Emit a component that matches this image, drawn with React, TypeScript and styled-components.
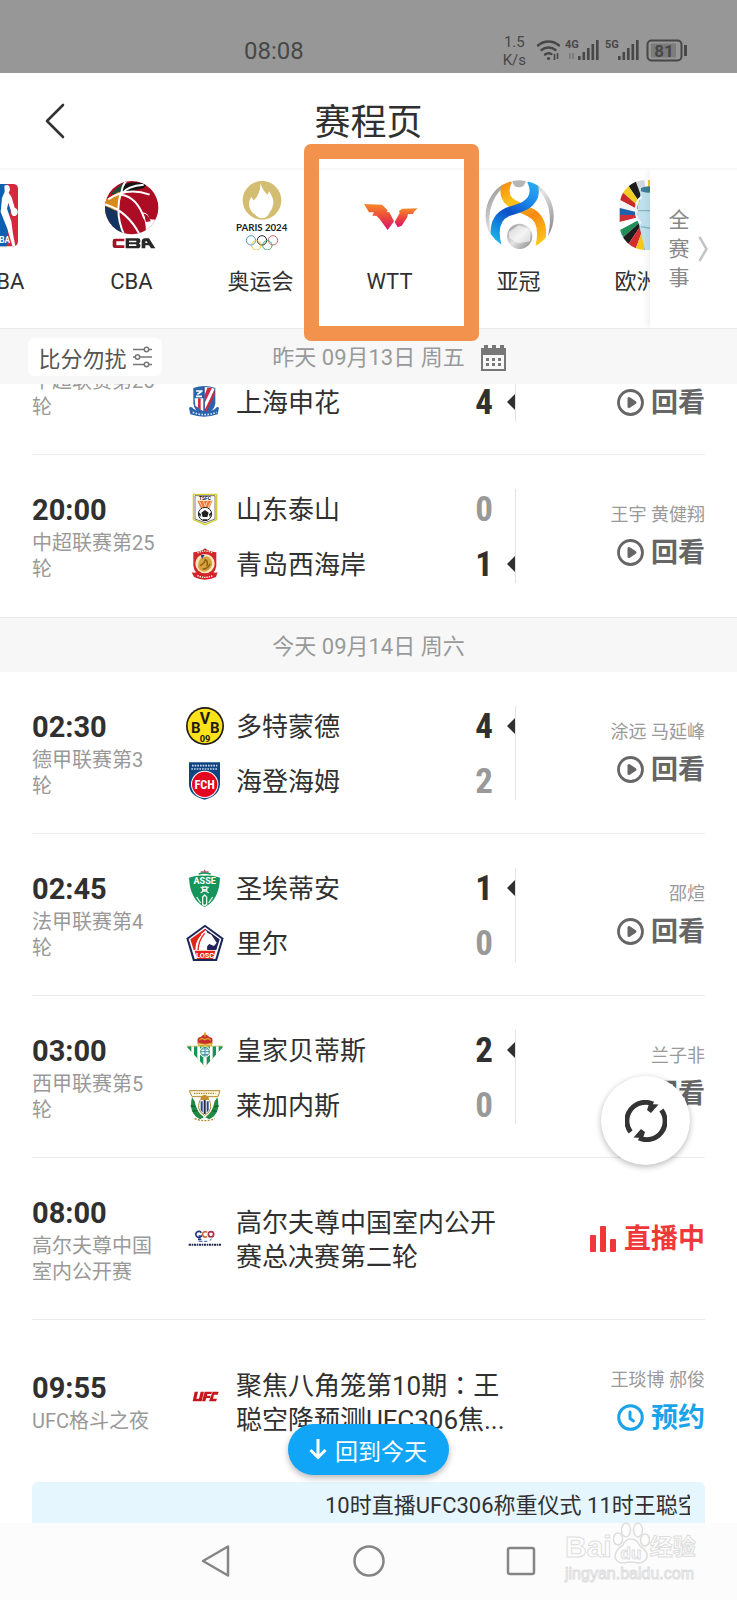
import React from 'react';
import styled, { createGlobalStyle, css } from 'styled-components';

const GlobalStyle = createGlobalStyle`
  *, *::before, *::after { box-sizing: border-box; }
  body {
    margin: 0;
    background: #fff;
    color: #303030;
    font-family: Roboto, "Noto Sans CJK SC", sans-serif;
  }
  button { font: inherit; color: inherit; background: none; border: 0; padding: 0; }
  a { color: inherit; text-decoration: none; }
  h1, h2, h3, p, ul { margin: 0; padding: 0; font-weight: inherit; list-style: none; }
  svg { display: block; flex: none; }
`;

/* ---------- page frame ---------- */

const Page = styled.div`
  height: 100vh;
  display: flex;
  flex-direction: column;
  background: #fff;
`;

const StatusBar = styled.div`
  flex: none;
  height: 73px;
  padding: 28px 49px 0 244px;
  display: flex;
  justify-content: space-between;
  align-items: center;
  background: #979797;
  color: #474747;
  font-size: 24px;
`;

const StatusRight = styled.div`
  display: flex;
  align-items: center;
  gap: 10px;
`;

const Speed = styled.span`
  font-size: 15px;
  line-height: 18px;
  text-align: center;
`;

const Header = styled.header`
  flex: none;
  height: 97px;
  padding: 0 42px;
  display: grid;
  grid-template-columns: 28px 1fr 28px;
  align-items: center;
  border-bottom: 2px solid #f8f8f8;
`;

const Title = styled.h1`
  padding-top: 4px;
  font-size: 36px;
  line-height: 48px;
  text-align: center;
`;

/* ---------- competition tabs ---------- */

const TabBar = styled.nav`
  flex: none;
  height: 158px;
  display: flex;
  position: relative;
  z-index: 3;
`;

const TabScroller = styled.div`
  flex: 1;
  min-width: 0;
  overflow-x: clip;
  display: flex;
`;

const Tab = styled.a`
  flex: none;
  width: 129px;
  padding-top: 10px;
  display: flex;
  flex-direction: column;
  align-items: center;
  gap: 19px;
  position: relative;
  font-size: 22px;
  line-height: 26px;
  &:first-child { margin-left: -62px; }
`;

const Marker = styled.span`
  position: absolute;
  top: -26px;
  left: -21px;
  right: -25px;
  bottom: -13px;
  border: 15px solid #f2924c;
  border-radius: 7px;
`;

const AllEvents = styled.button`
  flex: none;
  width: 87px;
  padding: 0 28px 0 18px;
  display: flex;
  align-items: center;
  gap: 8px;
  background: #fff;
  box-shadow: -3px 0 6px rgba(0, 0, 0, 0.06);
  clip-path: inset(0 0 0 -10px);
  position: relative;
  color: #888;
  font-size: 21px;
  line-height: 29px;
  text-align: center;
`;

const AllEventsText = styled.span`
  width: 22px;
`;

/* ---------- date bars ---------- */

const DateBar = styled.div<{ $tall?: boolean }>`
  flex: none;
  height: ${p => (p.$tall ? 56 : 55)}px;
  padding: 0 28px;
  display: grid;
  grid-template-columns: 134px 1fr 134px;
  align-items: center;
  background: #f7f7f7;
  border-top: 1px solid #e9e9e9;
  position: relative;
  z-index: 2;
`;

const DateText = styled.h2`
  grid-column: 2;
  padding-top: 3px;
  color: #999;
  font-size: 22px;
  line-height: 30px;
  text-align: center;
`;

const FilterButton = styled.button`
  height: 38px;
  display: flex;
  align-items: center;
  justify-content: center;
  gap: 6px;
  border-radius: 6px;
  background: #fff;
  color: #555;
  font-size: 22px;
`;

const CalendarButton = styled.button`
  position: absolute;
  top: 16px;
  left: calc(50% + 112px);
`;

/* ---------- schedule ---------- */

const Body = styled.main`
  flex: 1;
  min-height: 0;
  overflow: hidden;
  position: relative;
`;

const Rows = styled.div`
  margin-top: -91px;
  display: flex;
  flex-direction: column;
`;

const Row = styled.article<{ $last?: boolean }>`
  flex: none;
  height: 162px;
  margin: 0 32px;
  display: flex;
  align-items: center;
  border-bottom: 1px solid ${p => (p.$last ? 'transparent' : '#ebebeb')};
`;

const When = styled.div`
  flex: none;
  width: 124px;
  margin-right: 30px;
  white-space: nowrap;
`;

const Time = styled.time`
  display: block;
  font-size: 29px;
  line-height: 40px;
  font-weight: 700;
`;

const League = styled.p`
  color: #999;
  font-size: 20px;
  line-height: 26px;
`;

const Matchup = styled.div`
  flex: 1;
  min-width: 0;
  padding-top: 1px;
  display: flex;
  flex-direction: column;
  gap: 17px;
  border-right: 1px solid #e2e2e2;
`;

const TeamLine = styled.div`
  height: 38px;
  display: flex;
  align-items: center;
`;

const TeamName = styled.span`
  flex: 1;
  padding: 3px 0 0 12px;
  font-size: 26px;
  line-height: 34px;
`;

const Score = styled.span<{ $won?: boolean }>`
  width: 32px;
  padding-top: 2px;
  text-align: center;
  font-family: "Liberation Sans Narrow", "Roboto Condensed", Roboto, sans-serif;
  font-size: 35px;
  line-height: 38px;
  font-weight: 700;
  color: ${p => (p.$won ? '#303030' : '#999')};
`;

const WinMark = styled.span<{ $won?: boolean }>`
  width: 15px;
  display: flex;
  justify-content: flex-end;
  visibility: ${p => (p.$won ? 'visible' : 'hidden')};
`;

const EventBlock = styled.div`
  flex: 1;
  min-width: 0;
  display: flex;
  align-items: center;
`;

const EventTitle = styled.h3`
  flex: none;
  padding: 3px 0 0 12px;
  font-size: 26px;
  line-height: 34px;
  white-space: nowrap;
`;

const WideColon = styled.span`
  font-family: "Noto Sans CJK TC", sans-serif;
`;

const Side = styled.div`
  flex: none;
  width: 189px;
  padding-top: 1px;
  display: flex;
  flex-direction: column;
  align-items: flex-end;
  gap: 9px;
`;

const Crew = styled.p`
  color: #999;
  font-size: 18px;
  line-height: 24px;
  text-align: right;
  white-space: pre-line;
`;

const tones = { replay: '#666', live: '#f0373a', book: '#1ba3ea' };

const Action = styled.button<{ $tone: keyof typeof tones }>`
  display: flex;
  align-items: center;
  gap: 7px;
  color: ${p => tones[p.$tone]};
  font-size: 27px;
  line-height: 34px;
  font-weight: 700;
`;

const Ticker = styled.div`
  flex: none;
  height: 48px;
  margin: 0 32px;
  padding: 0 15px;
  border-radius: 6px;
  background: #e5f6fe;
`;

const TickerTrack = styled.div`
  overflow: hidden;
  padding-left: 278px;
  white-space: nowrap;
  font-size: 22px;
  line-height: 48px;
`;

/* ---------- floating controls ---------- */

const floating = css`
  position: absolute;
  display: flex;
  align-items: center;
  justify-content: center;
`;

const RefreshButton = styled.button`
  ${floating}
  right: 47px;
  bottom: 358px;
  width: 89px;
  height: 89px;
  border-radius: 50%;
  background: #fff;
  box-shadow: 0 2px 6px rgba(0, 0, 0, 0.28);
`;

const TodayButton = styled.button`
  ${floating}
  left: 50%;
  bottom: 48px;
  width: 161px;
  height: 51px;
  margin-left: -81px;
  gap: 8px;
  border-radius: 26px;
  background: #10a5f7;
  box-shadow: 0 3px 6px rgba(0, 0, 0, 0.28);
  color: #fff;
  font-size: 23px;
`;

/* ---------- system navigation ---------- */

const SystemNav = styled.footer`
  flex: none;
  height: 77px;
  background: #fcfcfc;
  position: relative;
`;

const NavKeys = styled.div`
  width: 62%;
  height: 76px;
  margin: 0 auto;
  display: grid;
  grid-template-columns: repeat(3, 1fr);
  place-items: center;
`;

const Watermark = styled.div`
  position: absolute;
  right: 39px;
  bottom: 16px;
  width: 133px;
  color: #fdfdfd;
  font-family: "Liberation Sans", "Noto Sans CJK SC", sans-serif;
  font-weight: 700;
  -webkit-text-stroke: 1px #dedede;
`;

const WatermarkTop = styled.div`
  display: flex;
  align-items: flex-end;
  font-size: 30px;
  line-height: 34px;
`;

const WatermarkCn = styled.span`
  font-size: 23px;
  line-height: 34px;
`;

const WatermarkUrl = styled.div`
  font-size: 16px;
  line-height: 20px;
  font-weight: 400;
`;

/* ---------- small icons ---------- */

const StatusIcons = () => (
  <svg width="152" height="26" viewBox="0 0 152 26" fill="none" stroke="#474747">
    <g strokeWidth="2.4" strokeLinecap="round">
      <path d="M2 7.500a16 16 0 0 1 21 0M5.500 12a11 11 0 0 1 14 0M9 16.500a6 6 0 0 1 6.500-.5" />
    </g>
    <circle cx="12.500" cy="20.500" r="1.600" fill="#474747" stroke="none" />
    <path d="M18.500 16v6M21.500 15v6" strokeWidth="1.600" />
    <path d="M34 15v6M37 15v6" strokeWidth="1.500" stroke="#777" />
    <g fill="#474747" stroke="none" fontFamily="Roboto, sans-serif" fontWeight="700">
      <text x="29" y="10" fontSize="11">4G</text>
      <text x="69" y="10" fontSize="11">5G</text>
      <path d="M42 18h2.600v4H42zM46.500 14h2.600v8h-2.600zM51 10h2.600v12H51zM55.500 6h2.600v16h-2.600zM60 2h2.600v20H60z" />
      <path d="M82 18h2.600v4H82zM86.500 14h2.600v8h-2.600zM91 10h2.600v12H91zM95.500 6h2.600v16h-2.600zM100 2h2.600v20H100z" />
      <rect x="148" y="7" width="3" height="11" />
      <rect x="115" y="5.500" width="25" height="14" fill="#7c7c7c" />
      <text x="128" y="18.500" fontSize="17" textAnchor="middle">81</text>
    </g>
    <rect x="111.500" y="2.500" width="34" height="20" rx="4" strokeWidth="2" />
  </svg>
);

const BackIcon = () => (
  <svg width="28" height="40" viewBox="0 0 28 40" fill="none" stroke="#333" strokeWidth="2.600" strokeLinecap="round" strokeLinejoin="round">
    <path d="M21 4L5 20l16 16" />
  </svg>
);

const SlidersIcon = () => (
  <svg width="19" height="22" viewBox="0 0 19 22" fill="none" stroke="#777" strokeWidth="1.500">
    <path d="M0 3.500h11M16 3.500h3M0 11h2M7 11h12M0 18.500h11M16 18.500h3" />
    <circle cx="13.500" cy="3.500" r="2.200" /><circle cx="4.500" cy="11" r="2.200" /><circle cx="13.500" cy="18.500" r="2.200" />
  </svg>
);

const CalendarIcon = () => (
  <svg width="26" height="26" viewBox="0 0 26 26" fill="#777">
    <path fillRule="evenodd" d="M0 3h3V0h4v3h4V0h4v3h4V0h4v3h2v23H0zM2 10v14h21V10z" />
    <path d="M5 13h3v3H5zM11 13h3v3h-3zM17 13h3v3h-3zM5 18h3v3H5zM11 18h3v3h-3zM17 18h3v3h-3z" />
  </svg>
);

const PlayIcon = () => (
  <svg width="27" height="27" viewBox="0 0 27 27">
    <circle cx="13.500" cy="13.500" r="12" fill="none" stroke="#666" strokeWidth="2.800" />
    <path d="M12 9.500v8l6-4z" fill="#666" stroke="#666" strokeWidth="3" strokeLinejoin="round" />
  </svg>
);

const ClockIcon = () => (
  <svg width="27" height="27" viewBox="0 0 27 27" fill="none" stroke="#1ba3ea" strokeWidth="3" strokeLinecap="round" strokeLinejoin="round">
    <circle cx="13.500" cy="13.500" r="11.800" /><path d="M13 8v6.500l3.500 2.500" />
  </svg>
);

const BarsIcon = () => (
  <svg width="27" height="26" viewBox="0 0 27 26" fill="#f0373a">
    <rect x="0" y="9" width="6" height="17" rx="1" /><rect x="10" y="0" width="6" height="26" rx="1" /><rect x="20" y="13" width="6" height="13" rx="1" />
  </svg>
);

const RefreshIcon = () => (
  <svg width="42" height="42" viewBox="0 0 42 42" fill="none" stroke="#333">
    <g strokeWidth="5">
      <path d="M5.600 32A18.500 18.500 0 0 1 28 4" /><path d="M36.400 10A18.500 18.500 0 0 1 14 38" />
    </g>
    <path d="M33.500 4.500L26 13l-4-3 2-6zM8.500 37.500L16 29l4 3-2 6z" fill="#333" stroke="none" />
  </svg>
);

/* ---------- competition logos, 210-unit canvas ---------- */

const Logo = ({ children }: { children: React.ReactNode }) => (
  <svg width="70" height="70" viewBox="0 0 210 210">{children}</svg>
);

const NbaLogo = () => (
  <Logo>
    <rect x="61" y="12" width="89" height="187" rx="14" fill="#d5273e" />
    <path d="M75 12h42l-9 35 20 40-12 112H75q-14 0-14-14V26q0-14 14-14z" fill="#0f5fb0" />
    <path d="M109 17q9-5 15 2l2 10-4 9 9 14 9 31q10 3 9 15-3 12-14 10-7-5-6-15l-8-25-4 18 13 38 5 38 7 36h-9l-15-52-20-50 4-42 8-19z" fill="#fff" />
    <text x="76" y="188" fontSize="25" fontWeight="700" fill="#fff" fontFamily="Roboto, sans-serif">NBA</text>
  </Logo>
);

const CbaLogo = () => (
  <Logo>
    <defs><clipPath id="cba-ball"><circle cx="104" cy="83" r="80" /></clipPath></defs>
    <g clipPath="url(#cba-ball)">
      <path d="M0 0h210v170H0z" fill="#ad0d24" />
      <path d="M60 30Q90-5 150 12L140 24 70 42z" fill="#161616" />
      <path d="M40 42L88 0 72 42z" fill="#1d4c3a" />
      <path d="M24 100V60L65 35l10 8q-8 22-10 46z" fill="#d48a1f" />
      <path d="M20 76l44 20q-2 40 22 68H20z" fill="#13345f" />
      <path d="M134 98q18-4 24 20l30 2-30 44h-14q8-30-11-66z" fill="#fff" />
      <path d="M136 100q8 10 11 26l14-2q-6-22-25-24z" fill="#ad0d24" />
      <g fill="none" stroke="#fff" strokeWidth="6">
        <path d="M20 72Q90 90 128 164M72 36Q52 100 82 166M72 44Q120 50 142 116M34 58Q90 20 158 44M76 40Q90 18 140 14M90 0q-18 20-16 44" />
      </g>
    </g>
    <path d="M82 176H54q-7 0-7 7v15q0 6 7 6h28v-8H58v-12h24z" fill="#a51327" />
    <path fillRule="evenodd" d="M86 175h38q6 0 6 7v4l-4 4 4 4v4q0 7-8 7H86zM96 182v5h22v-5zM96 193v5h22v-5z" fill="#272727" />
    <path d="M134 205v-20q1-10 10-10h12l19 30h-13l-6-9h-11v9zM145 189h7l-4-6q-3 0-3 3z" fill="#272727" fillRule="evenodd" />
  </Logo>
);

const OlympicLogo = () => (
  <Logo>
    <circle cx="108" cy="61" r="58" fill="#d3bd72" />
    <path d="M104 10q4 20 20 34 4-3 5-10 14 19 13 36-3 24-20 35-4 3-8 1-7-3-14 0-5 3-12-2-20-12-19-34 0-11 8-20 2 9 7 11 18-17 20-51z" fill="#fff" />
    <path d="M84 94q7 12 18 10l6-3 6 3q12 2 18-10-5 20-24 21-19-1-24-21z" fill="#fff" />
    <text x="107" y="152" fontSize="29" fontWeight="700" textAnchor="middle" fill="#222" fontFamily="Lato, sans-serif">PARIS 2024</text>
    <g fill="none" strokeWidth="3">
      <circle cx="75" cy="181" r="14" stroke="#4b9cc8" /><circle cx="108" cy="181" r="14" stroke="#222" /><circle cx="141" cy="181" r="14" stroke="#c86a6a" />
      <circle cx="91" cy="196" r="14" stroke="#e5c34f" /><circle cx="124" cy="196" r="14" stroke="#4aa56f" />
    </g>
  </Logo>
);

const WttLogo = () => (
  <Logo>
    <defs>
      <linearGradient id="wtt" x1="0" y1="0" x2="0" y2="1">
        <stop offset="0" stopColor="#f58a2a" /><stop offset=".45" stopColor="#ef4d38" /><stop offset="1" stopColor="#d9106f" />
      </linearGradient>
    </defs>
    <path d="M27 72l54 2 17 17 -3 5 8 1 14 27-19 26-26-35-8-8H52l5-10H42z" fill="url(#wtt)" />
    <path d="M188 85l-46 1-10 7 2 6-15 27 9 16 12-5 16-24 3-11h15l3-7z" fill="url(#wtt)" />
  </Logo>
);

const AfcLogo = () => (
  <Logo>
    <defs>
      <clipPath id="afc-disc"><circle cx="107" cy="105" r="104" /></clipPath>
      <linearGradient id="afc-b" gradientUnits="userSpaceOnUse" x1="150" y1="0" x2="40" y2="190"><stop offset="0" stopColor="#2cb0f2" /><stop offset=".3" stopColor="#1a86ea" /><stop offset=".55" stopColor="#0b4fc8" /><stop offset="1" stopColor="#1cb8f0" /></linearGradient>
      <linearGradient id="afc-o" gradientUnits="userSpaceOnUse" x1="70" y1="0" x2="170" y2="190"><stop offset="0" stopColor="#f58a12" /><stop offset=".3" stopColor="#fbc21a" /><stop offset=".6" stopColor="#f58a12" /><stop offset="1" stopColor="#fcc813" /></linearGradient>
      <linearGradient id="afc-g" x1="0" y1="0" x2="1" y2="1"><stop offset="0" stopColor="#8d8d8d" /><stop offset=".5" stopColor="#e4e4e4" /><stop offset="1" stopColor="#808080" /></linearGradient>
    </defs>
    <path d="M62 11C10 35-14 110 22 168 8 106 18 54 66 15zM152 11c52 24 76 99 40 157 14-62 4-114-44-153z" fill="url(#afc-g)" />
    <g clipPath="url(#afc-disc)" fill="none" strokeWidth="27">
      <circle cx="105" cy="2" r="20" fill="#b5b5b5" />
      <path d="M72 0Q52 40 76 64 94 78 136 96q50 22 32 104" stroke="url(#afc-o)" />
      <path d="M142 0q24 50-18 76-14 8-54 20-52 24-30 104" stroke="url(#afc-b)" />
    </g>
    <circle cx="107" cy="169" r="38" fill="url(#afc-g)" />
    <path d="M74 156l30-20 36 14-2 34-36 6-26-16z" fill="#fff" opacity=".6" />
  </Logo>
);

const EuroLogo = () => {
  const flags = ['#cfd8e0', '#1d1d1d', '#f1cf24', '#c92a2a', '#f5f5f5', '#2060ac', '#d02f35', '#fff', '#20905a', '#1d1d1d', '#d42d2d', '#f6c51e', '#3187c2'];
  return (
    <Logo>
      <defs><clipPath id="euro-clip"><rect x="20" y="0" width="170" height="210" rx="76" /></clipPath></defs>
      <g clipPath="url(#euro-clip)">
        {flags.map((c, i) => {
          const a = ((-96 - i * 14) * Math.PI) / 180;
          const b = ((-96 - (i + 1) * 14) * Math.PI) / 180;
          return <path key={i} fill={c} d={`M105 105L${105 + 160 * Math.cos(a)} ${105 + 160 * Math.sin(a)}L${105 + 160 * Math.cos(b)} ${105 + 160 * Math.sin(b)}z`} />;
        })}
        <path d="M105 0h85v210h-85z" fill="#f1cf24" />
        <path d="M84 30q20-14 60 0l-8 34q14 30 0 70l-8 76H96L78 134q-12-40 2-74z" fill="#bfe0ec" />
        <path d="M86 50q-22 14-16 54 4 18 14 26" fill="none" stroke="#e9f4f8" strokeWidth="7" />
        <path d="M84 34q20 8 46 0v-12q-26-8-46 2z" fill="#3e7d96" />
        <path d="M76 92h40M84 140l34 6" stroke="#83b5c9" strokeWidth="4" />
      </g>
    </Logo>
  );
};

/* ---------- club crests, 114-unit canvas ---------- */

const Crest = ({ children }: { children: React.ReactNode }) => (
  <svg width="38" height="38" viewBox="0 0 114 114">{children}</svg>
);

const Shenhua = () => (
  <Crest>
    <path d="M22 15q34-12 66 0v46q-2 24-34 36Q24 86 22 61z" fill="#2b63ad" />
    <path d="M54 12q20 0 32 5L56 86zM26 46h28v40L28 68z" fill="#fff" />
    <path d="M64 14h14L56 60V36zM86 20v16L60 88l-4-8zM36 46h8v34l-8-6z" fill="#cf2a44" />
    <path d="M30 24h20M34 34l12-8M30 40h18" stroke="#fff" strokeWidth="5" />
    <path d="M54 12v80" stroke="#1d478e" strokeWidth="4" />
    <path d="M9 74q8-6 14 4 34 20 64 0 6-10 12-4l-4 20q-40 14-82 0z" fill="#2b63ad" />
    <path d="M20 88q36 14 72 0" stroke="#cfe0f3" strokeWidth="5" strokeDasharray="5 4" fill="none" />
  </Crest>
);

const Taishan = () => (
  <Crest>
    <path d="M22 13h70v76L57 104 22 89z" fill="#fff" stroke="#d8cf35" strokeWidth="4" />
    <path d="M27 17h60v70L57 98 27 87z" fill="none" stroke="#333" strokeWidth="2" />
    <text x="57" y="29" fontSize="15" fontWeight="700" textAnchor="middle" fill="#222" fontFamily="Roboto, sans-serif">TSFC</text>
    <path d="M34 32h46L68 58H46z" fill="#ec7a32" />
    <path d="M40 34l12 22M52 34l8 22M64 34l-8 22M76 34L64 56" stroke="#fff" strokeWidth="2" />
    <circle cx="57" cy="72" r="20" fill="#fff" stroke="#222" strokeWidth="3" />
    <path d="M57 60l11 8-4 13H50l-4-13zM37 66l8 7-3 10zM77 66l-8 7 3 10zM49 88h16l-3 4H52z" fill="#222" />
  </Crest>
);

const WestCoast = () => (
  <Crest>
    <path d="M22 22Q46 20 57 10q12 10 34 12v40q-2 24-34 38Q24 86 22 62z" fill="#d4252b" />
    <path d="M34 24q24-12 46 0" stroke="#fbe8d8" strokeWidth="4" strokeDasharray="4 3" fill="none" />
    <circle cx="57" cy="56" r="29" fill="#f6e6bf" />
    <path d="M36 64q0-28 26-30 18 6 16 26-6 18-24 20-16-2-18-16z" fill="#d7a33a" />
    <path d="M42 62q14-6 16-18 10 6 4 20M50 72q16 0 22-16" stroke="#8a5a1a" strokeWidth="4" fill="none" />
    <path d="M44 30h12l-8 12z" fill="#263f7d" />
    <path d="M17 82q8 2 14 0 26 16 52 0 6 2 12 0l-5 14q-34 16-66 0z" fill="#d4252b" />
    <path d="M34 92q23 10 46 0" stroke="#fff" strokeWidth="4" strokeDasharray="4 3" fill="none" />
  </Crest>
);

const Dortmund = () => (
  <Crest>
    <circle cx="57" cy="57" r="57" fill="#1d1b12" /><circle cx="57" cy="57" r="52" fill="#fce21b" />
    <g fill="#1d1b12" fontWeight="700" textAnchor="middle" fontFamily="Roboto, sans-serif">
      <text x="29" y="78" fontSize="45">B</text><text x="57" y="50" fontSize="48">V</text><text x="86" y="78" fontSize="45">B</text>
      <text x="57" y="104" fontSize="28">09</text>
    </g>
  </Crest>
);

const Heidenheim = () => (
  <Crest>
    <path d="M9 1h93v66q-2 36-46 46Q10 103 9 67z" fill="#0f4482" />
    <path d="M18 11h76M16 21h80" stroke="#c6d6e8" strokeWidth="5" strokeDasharray="5 3" />
    <circle cx="56" cy="67" r="41" fill="#fff" /><circle cx="56" cy="67" r="38" fill="#e3061f" />
    <text x="56" y="80" fontSize="37" fontWeight="700" textAnchor="middle" fill="#fff" fontFamily="Roboto Condensed, Roboto, sans-serif">FCH</text>
  </Crest>
);

const SaintEtienne = () => (
  <Crest>
    <path d="M9 26q22-8 47-6 25-2 46 6-2 66-46 88Q12 92 9 26z" fill="#15955a" />
    <path d="M44 9h24M56 2v12" stroke="#c0576a" strokeWidth="4" /><path d="M38 15q18-6 36 0" stroke="#15955a" strokeWidth="5" fill="none" />
    <text x="56" y="46" fontSize="27" fontWeight="700" textAnchor="middle" fill="#fff" fontFamily="Roboto, sans-serif">ASSE</text>
    <path d="M44 54l24 18M68 54L44 72M50 54h12v12H50zM50 84l6-6 6 6v22l-6 4-6-4zM32 84l12 18M80 84l-12 18" stroke="#e8f6ee" strokeWidth="4" fill="none" />
  </Crest>
);

const Lille = () => (
  <Crest>
    <path d="M57 2l56 41-20 68H21L1 43z" fill="#1b2857" />
    <path d="M57 9l49 36-18 60H26L8 45z" fill="#fff" />
    <path d="M57 14L13 46l10 32h22l12-40z" fill="#e1251b" />
    <path d="M57 14l44 32-10 32H45l12-30z" fill="#24245a" />
    <path d="M60 18l4 8 12 6 16 24-8 10-14-6q-10 6-6 18H28Q28 40 60 18z" fill="#fff" />
    <path d="M56 28Q38 48 36 78M44 32Q26 52 24 70" stroke="#e1251b" strokeWidth="4" fill="none" />
    <path d="M26 80h62l-7 25H33z" fill="#e1251b" />
    <text x="57" y="101" fontSize="22" fontWeight="700" textAnchor="middle" fill="#fff" fontFamily="Roboto, sans-serif">LOSC</text>
  </Crest>
);

const Betis = () => (
  <Crest>
    <defs><clipPath id="betis"><path d="M1 46h112L57 107z" /></clipPath></defs>
    <path d="M1 44h112L57 108z" fill="#d3a53a" />
    <g clipPath="url(#betis)">
      <path d="M0 44h114v70H0z" fill="#fff" />
      <path d="M4 44h12v66H4zM24 44h10v66H24zM42 44h10v66H42zM62 44h10v66H62zM80 44h10v66H80zM98 44h12v66H98z" fill="#149555" />
    </g>
    <circle cx="57" cy="62" r="17" fill="#fff" /><circle cx="57" cy="62" r="13" fill="none" stroke="#2b9560" strokeWidth="3" />
    <path d="M44 62h26M57 49v26M48 54h18M48 70h18" stroke="#3f8fae" strokeWidth="3" />
    <path d="M36 36q-6-16 8-18 8-8 13-8t13 8q14 2 8 18-21 8-42 0z" fill="#c92c2c" />
    <path d="M36 36q21 8 42 0l-2 6q-19 6-38 0zM53 10h8M57 4v14M40 28l8-6 9 4 9-4 8 6" stroke="#d9a62b" strokeWidth="4" fill="none" />
  </Crest>
);

const Leganes = () => (
  <Crest>
    <path d="M10 14h92l-6 18H18z" fill="#fbf6e2" stroke="#b28b2e" strokeWidth="3" />
    <path d="M24 22h64" stroke="#b28b2e" strokeWidth="4" strokeDasharray="4 3" />
    <path d="M18 34q-12 48 24 66l12-6Q32 80 26 46zM94 34q12 48-24 66l-12-6q22-14 28-48z" fill="#1e8a43" />
    <path d="M56 34q20 4 18 32-4 16-18 22-14-6-18-22-2-28 18-32z" fill="#fff" stroke="#b28b2e" strokeWidth="3" />
    <path d="M44 46h6v34l-6-8zM62 46h6v26l-6 8z" fill="#27478f" /><path d="M53 42h6v42h-6z" fill="#222c3e" />
    <path d="M44 34q12-16 24 0v8H44z" fill="#c78d2c" />
    <path d="M14 60l14 2M20 76l14-2M98 60l-14 2M92 76l-14-2" stroke="#12602c" strokeWidth="4" />
    <path d="M26 98q30 12 60 0" stroke="#b28b2e" strokeWidth="4" strokeDasharray="6 4" fill="none" />
  </Crest>
);

const GolfMark = () => (
  <Crest>
    <g fill="none" strokeWidth="5">
      <path d="M46 38a9 9 0 1 0 0 10h-8M36 58h10" stroke="#26357f" /><path d="M63 37a8 8 0 1 0 0 12" stroke="#cc6a38" /><circle cx="75" cy="43" r="8" stroke="#a8304a" />
    </g>
    <path d="M38 64h12M54 64h10M72 62l4-6" stroke="#3a66a8" strokeWidth="3" />
    <path d="M8 74h98" stroke="#232a52" strokeWidth="6" strokeDasharray="7 2 4 2" />
  </Crest>
);

const UfcMark = () => (
  <Crest>
    <g fill="#c9151e">
      <path d="M26 29h10l-5 21h8l5-21h10l-7 29H20z" />
      <path d="M56 29h22l-2 7H64l-1 5h11l-2 7H61l-3 10H48z" />
      <path d="M80 29h18l-3 9H84l-3 12h12l-3 8H69z" />
    </g>
  </Crest>
);

/* ---------- data ---------- */

type Team = { name: string; crest?: () => React.ReactElement; score: string; won?: boolean };
type Tone = keyof typeof tones;
type Item = {
  time: string;
  league: string[];
  teams?: Team[];
  mark?: () => React.ReactElement;
  title?: React.ReactNode[];
  crew?: string;
  tone: Tone;
};

const yesterday: Item[] = [
  { time: '', league: ['中超联赛第25', '轮'], crew: '\u00a0\n\u00a0', tone: 'replay', teams: [{ name: '', score: '' }, { name: '上海申花', crest: Shenhua, score: '4', won: true }] },
  { time: '20:00', league: ['中超联赛第25', '轮'], crew: '王宇 黄健翔', tone: 'replay', teams: [{ name: '山东泰山', crest: Taishan, score: '0' }, { name: '青岛西海岸', crest: WestCoast, score: '1', won: true }] },
];

const today: Item[] = [
  { time: '02:30', league: ['德甲联赛第3', '轮'], crew: '涂远 马延峰', tone: 'replay', teams: [{ name: '多特蒙德', crest: Dortmund, score: '4', won: true }, { name: '海登海姆', crest: Heidenheim, score: '2' }] },
  { time: '02:45', league: ['法甲联赛第4', '轮'], crew: '邵煊', tone: 'replay', teams: [{ name: '圣埃蒂安', crest: SaintEtienne, score: '1', won: true }, { name: '里尔', crest: Lille, score: '0' }] },
  { time: '03:00', league: ['西甲联赛第5', '轮'], crew: '兰子非', tone: 'replay', teams: [{ name: '皇家贝蒂斯', crest: Betis, score: '2', won: true }, { name: '莱加内斯', crest: Leganes, score: '0' }] },
  { time: '08:00', league: ['高尔夫尊中国', '室内公开赛'], tone: 'live', mark: GolfMark, title: ['高尔夫尊中国室内公开', '赛总决赛第二轮'] },
  { time: '09:55', league: ['UFC格斗之夜'], crew: '王琰博 郝俊', tone: 'book', mark: UfcMark, title: [<>聚焦八角笼第10期<WideColon>：</WideColon>王</>, '聪空降预测UFC306焦...'] },
];

const actions: Record<Tone, { label: string; icon: React.ReactNode }> = {
  replay: { label: '回看', icon: <PlayIcon /> },
  live: { label: '直播中', icon: <BarsIcon /> },
  book: { label: '预约', icon: <ClockIcon /> },
};

const tabs = [
  { label: 'NBA', Icon: NbaLogo },
  { label: 'CBA', Icon: CbaLogo },
  { label: '奥运会', Icon: OlympicLogo },
  { label: 'WTT', Icon: WttLogo, marked: true },
  { label: '亚冠', Icon: AfcLogo },
  { label: '欧洲杯', Icon: EuroLogo },
];

const ScheduleRow = ({ item, last }: { item: Item; last?: boolean }) => (
  <Row $last={last}>
    <When>
      <Time>{item.time || '\u00a0'}</Time>
      {item.league.map(l => <League key={l}>{l}</League>)}
    </When>
    {item.teams ? (
      <Matchup>
        {item.teams.map(t => (
          <TeamLine key={t.name}>
            {t.crest && <t.crest />}
            <TeamName>{t.name}</TeamName>
            <Score $won={t.won}>{t.score}</Score>
            <WinMark $won={t.won}>
              <svg width="8" height="16" viewBox="0 0 8 16" fill="#303030"><path d="M8 0v16L0 8z" /></svg>
            </WinMark>
          </TeamLine>
        ))}
      </Matchup>
    ) : (
      <EventBlock>
        {item.mark && <item.mark />}
        <EventTitle>{item.title?.map((t, i) => <div key={i}>{t}</div>)}</EventTitle>
      </EventBlock>
    )}
    <Side>
      {item.crew && <Crew>{item.crew}</Crew>}
      <Action $tone={item.tone}>{actions[item.tone].icon}{actions[item.tone].label}</Action>
    </Side>
  </Row>
);

export default function App() {
  return (
    <Page>
      <GlobalStyle />
      <StatusBar>
        <span>08:08</span>
        <StatusRight>
          <Speed>1.5<br />K/s</Speed>
          <StatusIcons />
        </StatusRight>
      </StatusBar>
      <Header>
        <button aria-label="返回"><BackIcon /></button>
        <Title>赛程页</Title>
      </Header>
      <TabBar>
        <TabScroller>
          {tabs.map(({ label, Icon, marked }) => (
            <Tab key={label} href="#">
              <Icon />
              {label}
              {marked && <Marker />}
            </Tab>
          ))}
        </TabScroller>
        <AllEvents>
          <AllEventsText>全赛事</AllEventsText>
          <svg width="11" height="26" viewBox="0 0 11 26" fill="none" stroke="#c4c4c4" strokeWidth="2.500"><path d="M1.500 1l7 12-7 12" /></svg>
        </AllEvents>
      </TabBar>
      <DateBar $tall>
        <FilterButton>比分勿扰<SlidersIcon /></FilterButton>
        <DateText>昨天 09月13日 周五</DateText>
        <CalendarButton aria-label="日历"><CalendarIcon /></CalendarButton>
      </DateBar>
      <Body>
        <Rows>
          {yesterday.map((item, i) => <ScheduleRow key={item.time} item={item} last={i === yesterday.length - 1} />)}
          <DateBar><DateText>今天 09月14日 周六</DateText></DateBar>
          {today.map((item, i) => <ScheduleRow key={item.time} item={item} last={i === today.length - 1} />)}
          <Ticker><TickerTrack>10时直播UFC306称重仪式 11时王聪空降</TickerTrack></Ticker>
        </Rows>
        <RefreshButton aria-label="刷新"><RefreshIcon /></RefreshButton>
        <TodayButton>
          <svg width="18" height="21" viewBox="0 0 18 21" fill="none" stroke="#fff" strokeWidth="3"><path d="M9 0v18M1.500 11L9 18.500l7.500-7.500" /></svg>
          回到今天
        </TodayButton>
      </Body>
      <SystemNav>
        <NavKeys>
          <button aria-label="后退"><svg width="32" height="34" viewBox="0 0 32 34" fill="none" stroke="#858585" strokeWidth="2.500" strokeLinejoin="round"><path d="M28 2.500v29L3 17z" /></svg></button>
          <button aria-label="主屏幕"><svg width="34" height="34" viewBox="0 0 34 34" fill="none" stroke="#858585" strokeWidth="2.500"><circle cx="17" cy="17" r="14.500" /></svg></button>
          <button aria-label="最近任务"><svg width="30" height="30" viewBox="0 0 30 30" fill="none" stroke="#858585" strokeWidth="2.500"><rect x="2" y="2" width="26" height="26" rx="2" /></svg></button>
        </NavKeys>
        <Watermark>
          <WatermarkTop>
            Bai
            <svg width="38" height="42" viewBox="0 0 38 42" fill="#fdfdfd" stroke="#dedede" strokeWidth="1.500">
              <ellipse cx="6" cy="17" rx="4.500" ry="6" /><ellipse cx="14" cy="8" rx="4.500" ry="7" /><ellipse cx="26" cy="8" rx="4.500" ry="7" /><ellipse cx="33" cy="18" rx="4.500" ry="6" />
              <path d="M19 17q6 0 9 7 8 5 7 11-2 6-9 6-7-2-14 0-8 0-9-6 0-7 8-12 2-6 8-6z" />
              <text x="19" y="37" fontSize="17" fontWeight="700" textAnchor="middle" strokeWidth="1">du</text>
            </svg>
            <WatermarkCn>经验</WatermarkCn>
          </WatermarkTop>
          <WatermarkUrl>jingyan.baidu.com</WatermarkUrl>
        </Watermark>
      </SystemNav>
    </Page>
  );
}
